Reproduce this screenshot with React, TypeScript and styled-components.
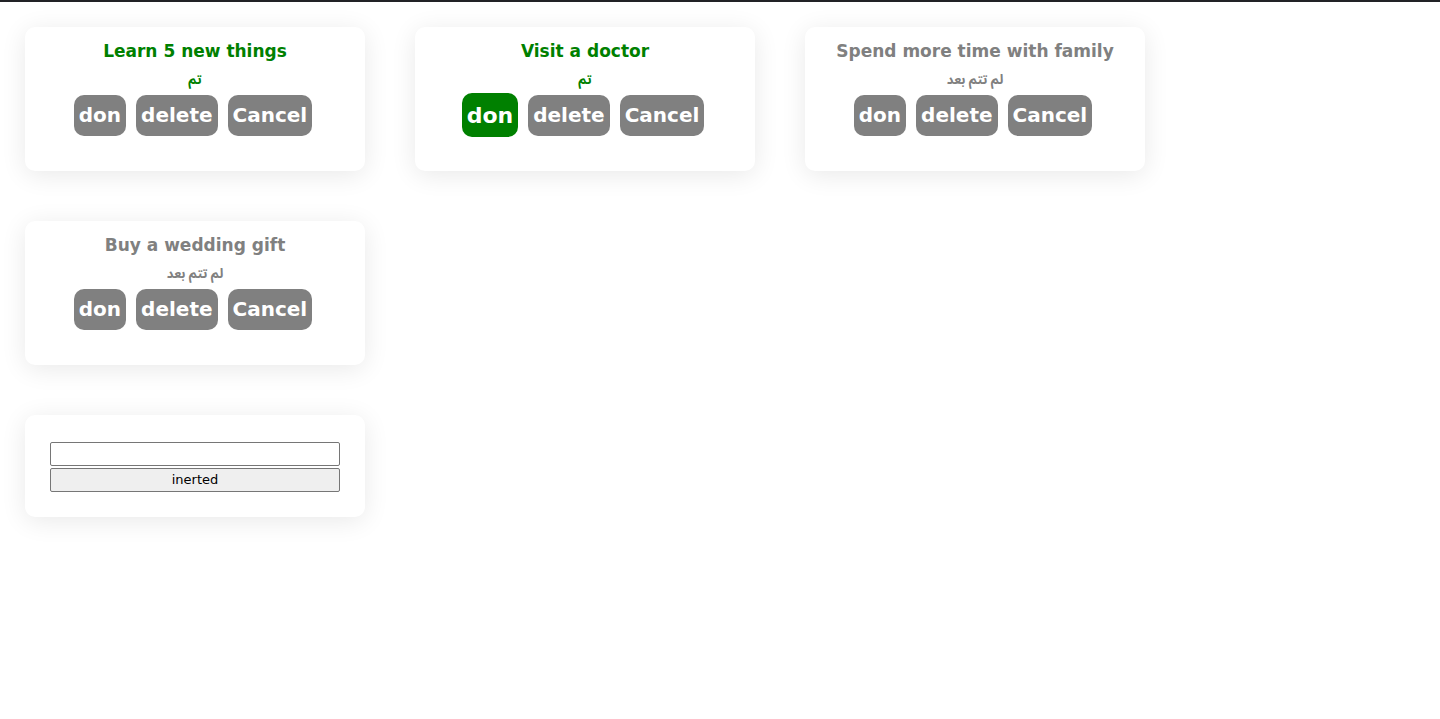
import React from "react";
import styled, { createGlobalStyle } from "styled-components";

const Global = createGlobalStyle`
  html, body { margin: 0; padding: 0; background: #fff; }
  body { font-family: "DejaVu Sans", sans-serif; }
`;

const Page = styled.div`
  border-top: 2px solid #222326;
  min-height: 717px;
  box-sizing: border-box;
  padding: 25px 0 0 25px;
`;

const Grid = styled.div`
  display: flex;
  flex-wrap: wrap;
  gap: 50px;
  width: 1170px;
`;

const Card = styled.div`
  width: 340px;
  height: 144px;
  box-sizing: border-box;
  background: #fff;
  border-radius: 10px;
  box-shadow: 0 4px 26px rgba(0, 0, 0, 0.09);
  padding-top: 10px;
  display: flex;
  flex-direction: column;
  align-items: center;
`;

const Title = styled.h3<{ $done: boolean }>`
  margin: 0;
  font-family: "DejaVu Sans", sans-serif;
  font-size: 17px;
  font-weight: 700;
  line-height: 28px;
  color: ${(p) => (p.$done ? "#008000" : "#808080")};
`;

const Status = styled.div<{ $done: boolean }>`
  font-family: "Noto Sans Arabic", "Noto Naskh Arabic", sans-serif;
  font-size: 13px;
  font-weight: 700;
  line-height: 28px;
  padding-top: 1px;
  height: 28px;
  box-sizing: border-box;
  color: ${(p) => (p.$done ? "#008000" : "#808080")};
`;

const Actions = styled.div`
  display: flex;
  align-items: center;
  gap: 10px;
  height: 44px;
  padding-right: 4px;
`;

const ActionButton = styled.button<{ $active?: boolean }>`
  border: none;
  border-radius: 10px;
  padding: 0 5px;
  height: ${(p) => (p.$active ? "44px" : "41px")};
  background: ${(p) => (p.$active ? "#008000" : "#808080")};
  color: #fff;
  font-family: "DejaVu Sans", sans-serif;
  font-weight: 700;
  font-size: ${(p) => (p.$active ? "22px" : "20px")};
  cursor: pointer;
`;

const FormCard = styled.form`
  width: 340px;
  height: 102px;
  box-sizing: border-box;
  background: #fff;
  border-radius: 10px;
  box-shadow: 0 4px 26px rgba(0, 0, 0, 0.09);
  padding: 27px 25px 25px;
  display: flex;
  flex-direction: column;
  gap: 2px;
  margin-top: 50px;
`;

const TextInput = styled.input`
  height: 24px;
  box-sizing: border-box;
  border: 1px solid #767676;
  border-radius: 2px;
  padding: 1px 2px;
  font-family: "DejaVu Sans", sans-serif;
  font-size: 13px;
`;

const SubmitButton = styled.button`
  height: 24px;
  box-sizing: border-box;
  border: 1px solid #767676;
  border-radius: 2px;
  background: #efefef;
  color: #000;
  font-family: "DejaVu Sans", sans-serif;
  font-size: 13px;
  padding: 0 0 1px;
`;

type Task = { title: string; done: boolean; active?: boolean };

const tasks: Task[] = [
  { title: "Learn 5 new things", done: true },
  { title: "Visit a doctor", done: true, active: true },
  { title: "Spend more time with family", done: false },
  { title: "Buy a wedding gift", done: false },
];

export default function App() {
  return (
    <>
      <Global />
      <Page>
        <Grid>
          {tasks.map((t) => (
            <Card key={t.title}>
              <Title $done={t.done}>{t.title}</Title>
              <Status $done={t.done} dir="rtl">
                {t.done ? "تم" : "لم تتم بعد"}
              </Status>
              <Actions>
                <ActionButton $active={t.active}>don</ActionButton>
                <ActionButton>delete</ActionButton>
                <ActionButton>Cancel</ActionButton>
              </Actions>
            </Card>
          ))}
        </Grid>
        <FormCard onSubmit={(e) => e.preventDefault()}>
          <TextInput type="text" />
          <SubmitButton type="submit">inerted</SubmitButton>
        </FormCard>
      </Page>
    </>
  );
}
